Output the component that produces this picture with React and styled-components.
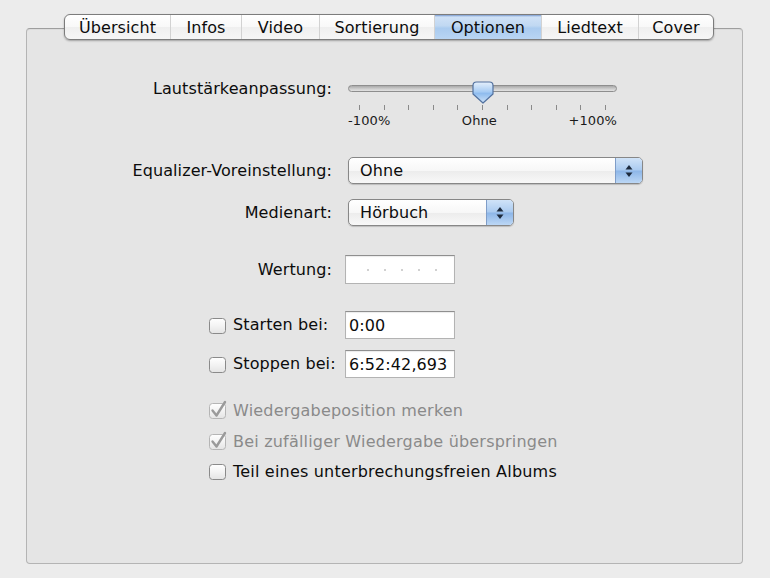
import React from 'react'
import styled, { createGlobalStyle } from 'styled-components'

const GlobalStyle = createGlobalStyle`
  html, body {
    margin: 0;
    padding: 0;
    background: #ececec;
  }
  body {
    font-family: "DejaVu Sans", "Liberation Sans", sans-serif;
    font-size: 16px;
    letter-spacing: 0.1px;
    color: #0c0c0c;
  }
`

const Window = styled.div`
  width: 770px;
  height: 578px;
  box-sizing: border-box;
  padding: 14px 27px 0 26px;
  display: flex;
  flex-direction: column;
  background: #ececec;
`

const TabBar = styled.div`
  position: relative;
  z-index: 1;
  display: flex;
  width: 650px;
  height: 26px;
  box-sizing: border-box;
  margin-left: 38px;
  border: 1px solid #7c7c7c;
  border-radius: 6px;
  overflow: hidden;
  background: linear-gradient(180deg, #ffffff 0%, #f8f8f8 50%, #efefef 51%, #f6f6f6 100%);
  box-shadow: 0 1px 2px rgba(0, 0, 0, 0.3);
`

const Tab = styled.div`
  width: ${props => props.width}px;
  box-sizing: border-box;
  display: flex;
  align-items: center;
  justify-content: center;
  font-size: 16px;
  line-height: 26px;
  padding-top: 1px;
  color: #0c0c0c;
  border-left: ${props => props.first ? 'none' : '1px solid #d2d2d2'};
  background: ${props => props.selected
    ? 'linear-gradient(180deg, #7a9bd0 0px, #cfe1f6 2px, #c0d8f2 45%, #aacbef 55%, #b9d5f3 100%)'
    : 'transparent'};
`

const Panel = styled.div`
  margin-top: -12px;
  height: 536px;
  box-sizing: border-box;
  border: 1px solid #b4b4b4;
  border-top-color: #9e9e9e;
  border-radius: 4px;
  background: #e5e5e5;
  box-shadow: inset 0 1px 0 #dcdcdc;
  padding-top: 49px;
  display: flex;
  flex-direction: column;
`

const Row = styled.div`
  display: flex;
  align-items: ${props => props.top ? 'flex-start' : 'center'};
  height: ${props => props.h}px;
  margin-top: ${props => props.gap || 0}px;
`

const Label = styled.div`
  width: 305px;
  flex: none;
  text-align: right;
  line-height: 22px;
  white-space: nowrap;
`

const CheckLabel = styled.div`
  width: 305px;
  flex: none;
  box-sizing: border-box;
  padding-left: 181px;
  display: flex;
  align-items: center;
  gap: 5px;
  line-height: 22px;
  white-space: nowrap;
`

const Field = styled.div`
  margin-left: ${props => props.offset || 13}px;
`

const OptionRow = styled.div`
  display: flex;
  align-items: center;
  gap: 5px;
  height: 22px;
  padding-left: 181px;
  margin-top: ${props => props.gap}px;
  white-space: nowrap;
  letter-spacing: 0.2px;
  color: ${props => props.disabled ? '#8a8a8a' : '#0c0c0c'};
`

/* slider */
const Slider = styled.div`
  width: 269px;
  display: flex;
  flex-direction: column;
`

const TrackArea = styled.div`
  position: relative;
  height: 27px;
`

const Track = styled.div`
  margin-top: 7px;
  height: 7px;
  box-sizing: border-box;
  border: 1px solid #8e8e8e;
  border-radius: 4px;
  background: linear-gradient(180deg, #a9a9a9 0%, #cfcfcf 60%, #e2e2e2 100%);
`

const Thumb = styled.svg`
  position: absolute;
  top: 3px;
`

const Ticks = styled.div`
  display: flex;
  justify-content: space-between;
  padding: 0 11px;
  height: 5px;
`

const Tick = styled.span`
  width: 1px;
  height: 5px;
  background: #8a8a8a;
`

const ScaleLabels = styled.div`
  display: flex;
  justify-content: space-between;
  margin-top: 3px;
  font-size: 13px;
  line-height: 16px;
  color: #1a1a1a;
`

/* popup button */
const Popup = styled.div`
  display: flex;
  width: ${props => props.width}px;
  height: 27px;
  box-sizing: border-box;
  border: 1px solid #878787;
  border-radius: 5px;
  overflow: hidden;
  background: linear-gradient(180deg, #ffffff 0%, #f7f7f7 50%, #ececec 52%, #f8f8f8 100%);
  box-shadow: 0 1px 1px rgba(0, 0, 0, 0.18);
`

const PopupText = styled.div`
  flex: 1;
  padding-left: 11px;
  line-height: 25px;
`

const PopupArrows = styled.div`
  width: 26px;
  display: flex;
  align-items: center;
  justify-content: center;
  border-left: 1px solid #7f9dc8;
  background: linear-gradient(180deg, #d0e3f8 0%, #abcbf0 48%, #8db6e8 52%, #bcd7f5 100%);
`

/* text fields */
const TextField = styled.div`
  width: 110px;
  height: ${props => props.h || 28}px;
  box-sizing: border-box;
  border: 1px solid #b3b3b3;
  border-top-color: #8f8f8f;
  background: #ffffff;
  padding-left: 3px;
  display: flex;
  align-items: center;
  box-shadow: inset 0 1px 1px rgba(0, 0, 0, 0.08);
`

const Dots = styled.div`
  display: flex;
  gap: 15px;
  padding-left: 18px;
`

const Dot = styled.span`
  width: 2px;
  height: 2px;
  border-radius: 1px;
  background: #c2c2c2;
`

const tabs = [
  { name: 'Übersicht', width: 105 },
  { name: 'Infos', width: 71 },
  { name: 'Video', width: 78 },
  { name: 'Sortierung', width: 115 },
  { name: 'Optionen', width: 107, selected: true },
  { name: 'Liedtext', width: 97 },
  { name: 'Cover', width: 75 },
]

const Checkbox = ({ checked, disabled }) => (
  <svg width="20" height="20" viewBox="0 0 20 20" style={{ flex: 'none' }}>
    <defs>
      <linearGradient id={disabled ? 'cbd' : 'cb'} x1="0" y1="0" x2="0" y2="1">
        <stop offset="0" stopColor="#ffffff" />
        <stop offset="0.5" stopColor="#f3f3f3" />
        <stop offset="1" stopColor="#e4e4e4" />
      </linearGradient>
    </defs>
    <rect x="1.5" y="3.5" width="16" height="15" rx="3"
      fill={`url(#${disabled ? 'cbd' : 'cb'})`}
      stroke={disabled ? '#b5b5b5' : '#8a8a8a'} />
    {checked && (
      <path d="M4.5 10.5 L8.5 15.5 L17 2" fill="none"
        stroke={disabled ? '#9a9a9a' : '#222'} strokeWidth="2.4"
        strokeLinecap="round" strokeLinejoin="round" />
    )}
  </svg>
)

const ThumbIcon = ({ left }) => (
  <Thumb width="22" height="23" viewBox="0 0 22 23" style={{ left }}>
    <defs>
      <linearGradient id="thumb" x1="0" y1="0" x2="0" y2="1">
        <stop offset="0" stopColor="#e6f0fc" />
        <stop offset="0.45" stopColor="#a9cdf4" />
        <stop offset="0.55" stopColor="#8fbcee" />
        <stop offset="1" stopColor="#cfe3f8" />
      </linearGradient>
    </defs>
    <path d="M4.5 1 H17.5 Q21 1 21 4.5 V13 L11 22 L1 13 V4.5 Q1 1 4.5 1 Z"
      fill="url(#thumb)" stroke="#52719f" strokeWidth="1.2" strokeLinejoin="round" />
  </Thumb>
)

const Arrows = () => (
  <svg width="8" height="14" viewBox="0 0 8 14">
    <path d="M4 1 L7.5 5.5 H0.5 Z" fill="#1d2a3d" />
    <path d="M4 13 L7.5 8.5 H0.5 Z" fill="#1d2a3d" />
  </svg>
)

const App = () => {
  const sliderWidth = 269
  const thumbWidth = 22
  const volume = 0 // -100 .. +100
  const thumbLeft = ((volume + 100) / 200) * (sliderWidth - thumbWidth) + 0.5

  return (
    <>
      <GlobalStyle />
      <Window>
        <TabBar>
          {tabs.map((t, i) => (
            <Tab key={t.name} width={t.width} first={i === 0} selected={t.selected}>
              {t.name}
            </Tab>
          ))}
        </TabBar>
        <Panel>
          <Row h={51} top>
            <Label>Lautstärkeanpassung:</Label>
            <Field offset={16}>
              <Slider>
                <TrackArea>
                  <Track />
                  <ThumbIcon left={thumbLeft} />
                </TrackArea>
                <Ticks>
                  {Array.from({ length: 11 }).map((_, i) => <Tick key={i} />)}
                </Ticks>
                <ScaleLabels>
                  <span>-100%</span>
                  <span>Ohne</span>
                  <span>+100%</span>
                </ScaleLabels>
              </Slider>
            </Field>
          </Row>

          <Row h={27} gap={28}>
            <Label>Equalizer-Voreinstellung:</Label>
            <Field offset={16}>
              <Popup width={295}>
                <PopupText>Ohne</PopupText>
                <PopupArrows><Arrows /></PopupArrows>
              </Popup>
            </Field>
          </Row>

          <Row h={27} gap={15}>
            <Label>Medienart:</Label>
            <Field offset={16}>
              <Popup width={166}>
                <PopupText>Hörbuch</PopupText>
                <PopupArrows><Arrows /></PopupArrows>
              </Popup>
            </Field>
          </Row>

          <Row h={29} gap={29}>
            <Label>Wertung:</Label>
            <Field>
              <TextField h={29}>
                <Dots>
                  {Array.from({ length: 5 }).map((_, i) => <Dot key={i} />)}
                </Dots>
              </TextField>
            </Field>
          </Row>

          <Row h={28} gap={27}>
            <CheckLabel>
              <Checkbox />
              Starten bei:
            </CheckLabel>
            <Field>
              <TextField>0:00</TextField>
            </Field>
          </Row>

          <Row h={28} gap={11}>
            <CheckLabel>
              <Checkbox />
              Stoppen bei:
            </CheckLabel>
            <Field>
              <TextField>6:52:42,693</TextField>
            </Field>
          </Row>

          <OptionRow gap={21} disabled>
            <Checkbox checked disabled />
            Wiedergabeposition merken
          </OptionRow>
          <OptionRow gap={9} disabled>
            <Checkbox checked disabled />
            Bei zufälliger Wiedergabe überspringen
          </OptionRow>
          <OptionRow gap={8}>
            <Checkbox />
            Teil eines unterbrechungsfreien Albums
          </OptionRow>
        </Panel>
      </Window>
    </>
  )
}

export default App
